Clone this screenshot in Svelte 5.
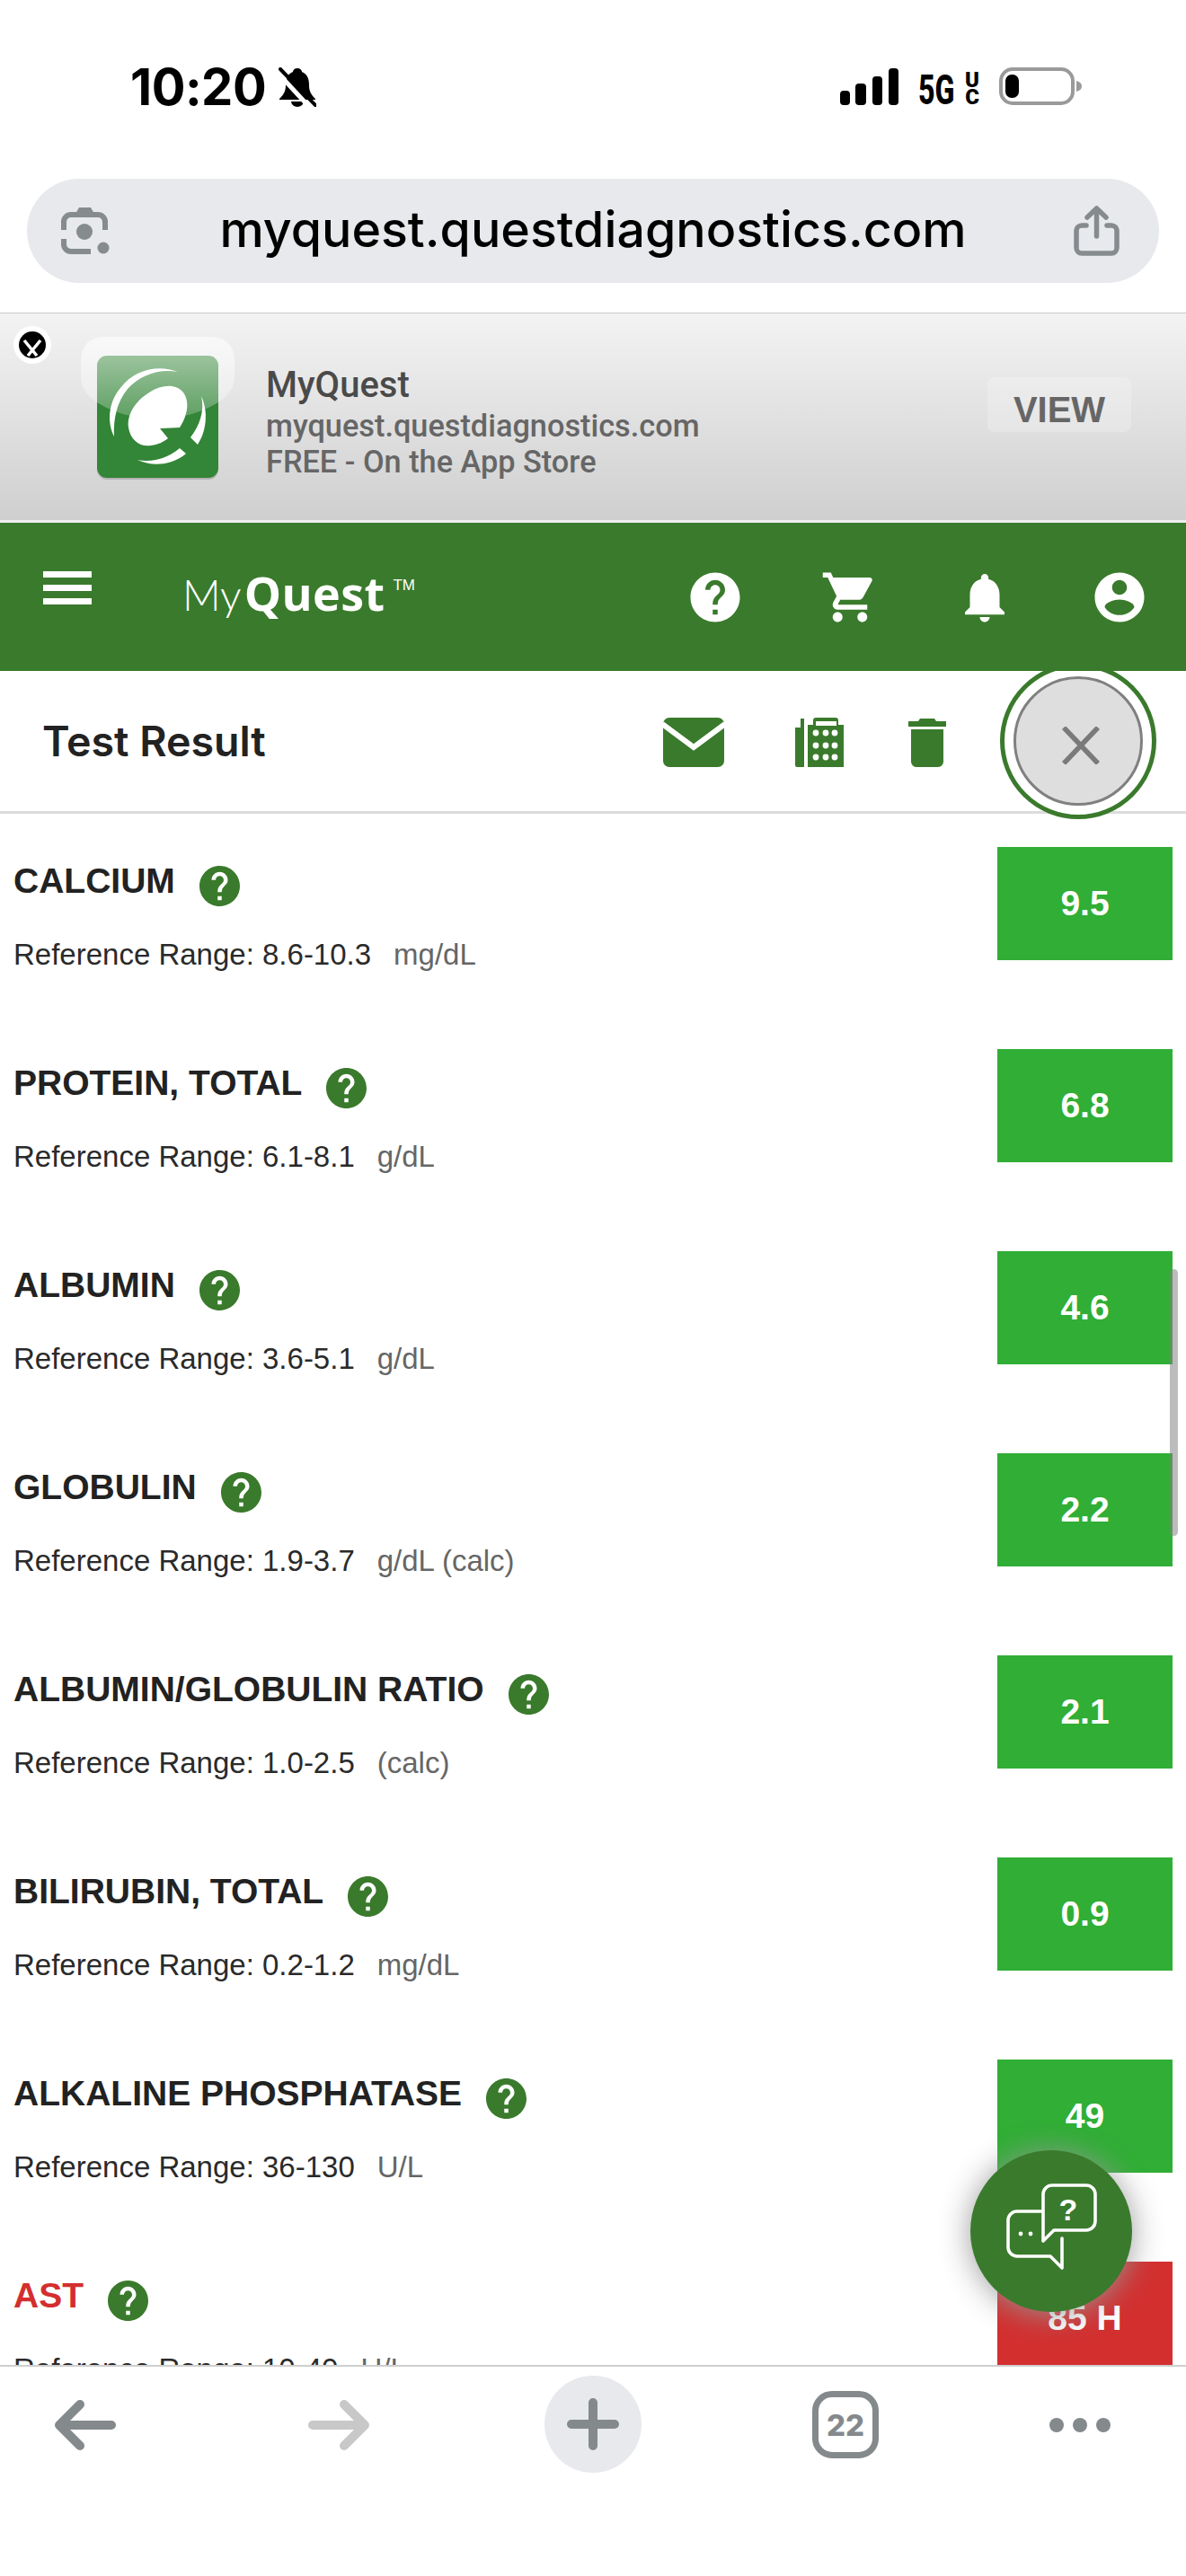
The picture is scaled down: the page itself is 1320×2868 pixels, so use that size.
<script lang="ts">
  interface Result {
    name: string;
    range: string;
    unit: string;
    value: string;
    high?: boolean;
  }

  const results: Result[] = [
    { name: 'CALCIUM', range: '8.6-10.3', unit: 'mg/dL', value: '9.5' },
    { name: 'PROTEIN, TOTAL', range: '6.1-8.1', unit: 'g/dL', value: '6.8' },
    { name: 'ALBUMIN', range: '3.6-5.1', unit: 'g/dL', value: '4.6' },
    { name: 'GLOBULIN', range: '1.9-3.7', unit: 'g/dL (calc)', value: '2.2' },
    { name: 'ALBUMIN/GLOBULIN RATIO', range: '1.0-2.5', unit: '(calc)', value: '2.1' },
    { name: 'BILIRUBIN, TOTAL', range: '0.2-1.2', unit: 'mg/dL', value: '0.9' },
    { name: 'ALKALINE PHOSPHATASE', range: '36-130', unit: 'U/L', value: '49' },
    { name: 'AST', range: '10-40', unit: 'U/L', value: '85 H', high: true },
  ];

  const helpPath =
    'M12 2C6.48 2 2 6.48 2 12s4.48 10 10 10 10-4.48 10-10S17.52 2 12 2zm1 17h-2v-2h2v2zm2.07-7.75l-.9.92C13.45 12.9 13 13.5 13 15h-2v-.5c0-1.1.45-2.1 1.17-2.83l1.24-1.26c.37-.36.59-.86.59-1.41 0-1.1-.9-2-2-2s-2 .9-2 2H8c0-2.21 1.79-4 4-4s4 1.79 4 4c0 .88-.36 1.68-.93 2.25z';
</script>

<div class="phone">
  <!-- iOS status bar -->
  <div class="status">
    <span class="time">10:20</span>
    <svg class="silent" width="42" height="45" viewBox="0 0 42 45">
      <path d="M21 1c-3 0-5 2-5 4C9 8 8 14 8 20c0 6-2 10-7 15v1h40v-1c-5-5-7-9-7-15 0-6-1-12-8-15 0-2-2-4-5-4zM14 38a7 6 0 0 0 14 0z" fill="#000" />
      <path d="M-1 6L36 46" stroke="#fff" stroke-width="5" />
      <path d="M2 2L41 42" stroke="#000" stroke-width="4" stroke-linecap="round" />
    </svg>
    <svg class="signal" width="65" height="41" viewBox="0 0 65 41">
      <rect x="0" y="25" width="11" height="16" rx="4" />
      <rect x="17" y="17" width="12" height="24" rx="4" />
      <rect x="36" y="9" width="11" height="32" rx="4" />
      <rect x="54" y="0" width="11" height="41" rx="4" />
    </svg>
    <span class="net">5G</span>
    <span class="net-uc"><span>U</span><span>C</span></span>
    <svg class="battery" width="92" height="42" viewBox="0 0 92 42">
      <rect x="2" y="2" width="80" height="38" rx="13" fill="none" stroke="#9a9a9a" stroke-width="4" />
      <rect x="7" y="8" width="15" height="26" rx="7" fill="#000" />
      <path d="M86 15c4 1 6 3 6 6s-2 5-6 6z" fill="#9a9a9a" />
    </svg>
  </div>

  <!-- address bar -->
  <div class="url-wrap">
    <div class="url-bar">
      <svg class="lens" width="55" height="54" viewBox="0 0 55 54" fill="none" stroke="#868b8e" stroke-width="6">
        <path d="M4 26V17a8 8 0 0 1 8-8h30a8 8 0 0 1 8 8v9" />
        <path d="M4 36v6a8 8 0 0 0 8 8h22" />
        <path d="M17 8l4-7h13l4 7z" fill="#868b8e" stroke="none" />
        <circle cx="27" cy="28" r="9" fill="#868b8e" stroke="none" />
        <circle cx="48" cy="46" r="6.5" fill="#868b8e" stroke="none" />
      </svg>
      <span class="url-text">myquest.questdiagnostics.com</span>
      <svg class="share" width="51" height="56" viewBox="0 0 51 56" fill="none" stroke="#868b8e" stroke-width="5.5" stroke-linecap="round" stroke-linejoin="round">
        <path d="M14 22H9a6 6 0 0 0-6 6v19a6 6 0 0 0 6 6h33a6 6 0 0 0 6-6V28a6 6 0 0 0-6-6h-5" />
        <path d="M25.5 34V4M15 13l10.5-10L36 13" />
      </svg>
    </div>
  </div>

  <!-- smart app banner -->
  <div class="banner">
    <div class="banner-close">
      <svg width="30" height="30" viewBox="0 0 30 30">
        <circle cx="15" cy="15" r="15" fill="#000" />
        <path d="M6 10L20 27M24 10L10 27" stroke="#fff" stroke-width="3.5" />
      </svg>
    </div>
    <svg class="app-icon" width="171" height="165" viewBox="0 0 171 165">
      <defs>
        <linearGradient id="gloss" x1="0" y1="0" x2="0" y2="1">
          <stop offset="0" stop-color="#fff" stop-opacity="0.6" />
          <stop offset="1" stop-color="#fff" stop-opacity="0.22" />
        </linearGradient>
      </defs>
      <rect x="18" y="23" width="135" height="136" rx="11" fill="#000" opacity="0.16" />
      <rect x="18" y="21" width="135" height="136" rx="11" fill="#338537" />
      <g fill="#fff" transform="translate(18 21)">
        <path d="M90 18C70 10 42 14 26 36 14 50 10 72 19 90 18 70 22 52 34 37 48 21 70 14 90 18Z" />
        <path d="M70 81L92 80C100 68 104 52 96 41 88 31 72 32 58 41 42 51 33 66 35 80 37 94 48 102 60 100 68 99 74 96 79 92Z" />
        <path d="M116 45C124 62 122 84 112 99L104 91C114 78 120 62 116 45Z" />
        <path d="M45 116C62 124 84 122 99 109L92 103C78 115 60 119 45 116Z" />
      </g>
      <path d="M28 0H143Q171 0 171 28V45Q171 72 120 87 85 93 50 87 0 72 0 45V28Q0 0 28 0Z" fill="url(#gloss)" />
    </svg>
    <div class="banner-text">
      <div class="banner-name">MyQuest</div>
      <div class="banner-line">myquest.questdiagnostics.com</div>
      <div class="banner-line">FREE - On the App Store</div>
    </div>
    <div class="view-btn">VIEW</div>
  </div>

  <!-- site header -->
  <header class="site-header">
    <div class="hamburger"><span></span><span></span><span></span></div>
    <div class="logo">
      <span class="logo-my">My</span><span class="logo-quest">Quest</span><span class="logo-tm">TM</span>
    </div>
    <div class="nav-icons">
      <svg width="66" height="66" viewBox="0 0 24 24" fill="#fff"><path d={helpPath} /></svg>
      <svg width="66" height="66" viewBox="0 0 24 24" fill="#fff"><path d="M7 18c-1.1 0-1.99.9-1.99 2S5.9 22 7 22s2-.9 2-2-.9-2-2-2zM1 2v2h2l3.6 7.59-1.35 2.45c-.16.28-.25.61-.25.96 0 1.1.9 2 2 2h12v-2H7.42c-.14 0-.25-.11-.25-.25l.03-.12.9-1.63h7.45c.75 0 1.41-.41 1.75-1.03l3.58-6.49c.08-.14.12-.31.12-.48 0-.55-.45-1-1-1H5.21l-.94-2H1zm16 16c-1.1 0-1.99.9-1.99 2s.89 2 1.99 2 2-.9 2-2-.9-2-2-2z" /></svg>
      <svg width="66" height="66" viewBox="0 0 24 24" fill="#fff"><path d="M12 22c1.1 0 2-.9 2-2h-4c0 1.1.89 2 2 2zm6-6v-5c0-3.07-1.64-5.64-4.5-6.32V4c0-.83-.67-1.5-1.5-1.5s-1.5.67-1.5 1.5v.68C7.63 5.36 6 7.92 6 11v5l-2 2v1h16v-1l-2-2z" /></svg>
      <svg width="66" height="66" viewBox="0 0 24 24" fill="#fff"><path d="M12 2C6.48 2 2 6.48 2 12s4.48 10 10 10 10-4.48 10-10S17.52 2 12 2zm0 3c1.66 0 3 1.34 3 3s-1.34 3-3 3-3-1.34-3-3 1.34-3 3-3zm0 14.2c-2.5 0-4.71-1.28-6-3.22.03-1.99 4-3.08 6-3.08 1.99 0 5.97 1.09 6 3.08-1.29 1.94-3.5 3.22-6 3.22z" /></svg>
    </div>
  </header>

  <!-- title row -->
  <div class="sub-header">
    <h1 class="page-title">Test Result</h1>
    <div class="actions">
      <svg width="68" height="55" viewBox="0 0 68 55">
        <rect width="68" height="55" rx="7" fill="#3a7a2c" />
        <path d="M-1 7L34 33 69 7" fill="none" stroke="#fff" stroke-width="6" />
      </svg>
      <svg class="fax" width="54" height="55" viewBox="0 0 54 55" fill="#3a7a2c">
        <path d="M0 11h6V1h4v54H2a2 2 0 0 1-2-2z" />
        <path fill-rule="evenodd" d="M20 3a3 3 0 0 1 3-3h22a3 3 0 0 1 3 3v5h6v47H14V8h6zm3 1v5h23V4z" />
        <g fill="#fff">
          {#each [17, 31, 44] as cy}
            {#each [23, 34, 44] as cx}
              <circle {cx} {cy} r="3.4" />
            {/each}
          {/each}
        </g>
      </svg>
      <svg width="42" height="54" viewBox="0 0 42 54" fill="#3a7a2c">
        <path d="M0 3h11l2-3h16l2 3h11v6H0z" />
        <path d="M3 12h36v36a6 6 0 0 1-6 6H9a6 6 0 0 1-6-6z" />
      </svg>
    </div>
    <div class="close-ring">
      <div class="close-btn">
        <svg width="42" height="42" viewBox="0 0 42 42">
          <path d="M2 1L40 41M40 1L2 41" stroke="#7a7a7a" stroke-width="5.5" />
        </svg>
      </div>
    </div>
  </div>

  <!-- results list -->
  <div class="list">
    {#each results as item (item.name)}
      <div class="row">
        <div class="row-info">
          <div class="row-head">
            <span class="row-name" class:high={item.high}>{item.name}</span>
            <svg class="help" width="45" height="45" viewBox="2 2 20 20" fill="#3a7a2c"><circle cx="12" cy="12" r="10" fill="#fff" /><path d={helpPath} /></svg>
          </div>
          <div class="row-range">
            Reference Range: {item.range}<span class="row-unit">{item.unit}</span>
          </div>
        </div>
        <div class="badge" class:high={item.high}>{item.value}</div>
      </div>
    {/each}

    <div class="scrollbar"></div>

    <div class="chat-fab">
      <svg width="180" height="180" viewBox="0 0 180 180" fill="none" stroke="#fff" stroke-width="3.6" stroke-linecap="round" stroke-linejoin="round">
        <path d="M81 101V49a10 10 0 0 1 10-10h38a10 10 0 0 1 10 10v30a10 10 0 0 1-10 10H93z" />
        <path d="M80 68H52a10 10 0 0 0-10 10v30a10 10 0 0 0 10 10h37l13 13V98" />
        <circle cx="56" cy="93" r="2.4" fill="#fff" stroke="none" />
        <circle cx="67" cy="93" r="2.4" fill="#fff" stroke="none" />
        <text x="109" y="78" text-anchor="middle" class="fab-q" fill="#fff" stroke="none">?</text>
      </svg>
    </div>
  </div>

  <!-- browser toolbar -->
  <div class="toolbar">
    <svg class="tb-back" width="68" height="56" viewBox="0 0 68 56" fill="none" stroke="#84898c" stroke-width="10" stroke-linecap="round" stroke-linejoin="round">
      <path d="M63 28H5M28 5L5 28l23 23" />
    </svg>
    <svg class="tb-forward" width="68" height="56" viewBox="0 0 68 56" fill="none" stroke="#c8c8c8" stroke-width="10" stroke-linecap="round" stroke-linejoin="round">
      <path d="M5 28h58M40 5l23 23-23 23" />
    </svg>
    <div class="tb-plus">
      <svg width="58" height="58" viewBox="0 0 58 58" fill="none" stroke="#84898c" stroke-width="10" stroke-linecap="round">
        <path d="M5 29h48M29 5v48" />
      </svg>
    </div>
    <div class="tb-tabs">22</div>
    <div class="tb-more"><span></span><span></span><span></span></div>
  </div>
</div>

<style>
  :global(body) {
    margin: 0;
    background: #fff;
    font-family: 'Liberation Sans', Arial, sans-serif;
  }

  .phone {
    width: 1320px;
    height: 2868px;
    display: flex;
    flex-direction: column;
    overflow: hidden;
    background: #fff;
  }

  .status {
    height: 45px;
    padding-top: 75px;
    display: flex;
    align-items: flex-start;
    color: #000;
    font-family: Inter, sans-serif;
  }

  .time {
    margin-left: 145px;
    font-size: 56px;
    font-weight: 700;
    line-height: 45px;
    letter-spacing: -0.5px;
  }

  .silent {
    margin-left: 14px;
  }

  .signal {
    margin-left: auto;
    margin-top: 1px;
  }

  .net {
    margin-left: 22px;
    font-size: 46px;
    font-weight: 800;
    line-height: 50px;
    width: 40px;
    transform: scaleX(0.7);
    transform-origin: left center;
    font-family: Roboto, sans-serif;
  }

  .net-uc {
    margin-left: 12px;
    display: flex;
    flex-direction: column;
    align-items: center;
    font-family: Roboto, sans-serif;
    font-size: 24px;
    font-weight: 900;
    line-height: 19px;
    margin-top: 5px;
  }

  .battery {
    margin-left: 22px;
    margin-right: 116px;
  }

  .url-wrap {
    padding: 79px 30px 0;
  }

  .url-bar {
    height: 116px;
    border-radius: 58px;
    background: #e7e9ec;
    display: flex;
    align-items: center;
    padding: 0 44px 0 37px;
  }

  .url-text {
    flex: 1;
    text-align: center;
    font-family: Inter, sans-serif;
    font-size: 55.5px;
    font-weight: 500;
    color: #000;
    margin: -6px 0 0 3px;
  }

  .banner {
    margin-top: 33px;
    height: 230px;
    display: flex;
    align-items: flex-start;
    border-top: 1px solid #c8c8c8;
    border-bottom: 3px solid #eee;
    background: linear-gradient(#f3f3f3, #cfcfcf);
    font-family: Roboto, sans-serif;
  }

  .banner-close {
    margin: 14px 0 0 15px;
    width: 42px;
    height: 42px;
    border-radius: 50%;
    background: #fff;
    display: flex;
    align-items: center;
    justify-content: center;
  }

  .app-icon {
    margin: 26px 0 0 33px;
  }

  .banner-text {
    margin: 57px 0 0 35px;
  }

  .banner-name {
    font-size: 40px;
    font-weight: 500;
    line-height: 46px;
    color: #4a4a4a;
    margin-bottom: 2px;
  }

  .banner-line {
    font-size: 34.3px;
    font-weight: 500;
    line-height: 40px;
    color: #666;
  }

  .view-btn {
    margin: 71px 61px 0 auto;
    width: 160px;
    height: 61px;
    border-radius: 8px;
    background: rgba(255, 255, 255, 0.22);
    text-align: center;
    font-family: 'Liberation Sans', sans-serif;
    font-size: 40px;
    font-weight: 700;
    line-height: 60px;
    color: #666;
    box-sizing: border-box;
    padding-top: 6px;
  }

  .site-header {
    position: relative;
    z-index: 2;
    height: 165px;
    display: flex;
    align-items: center;
    padding-left: 48px;
    background: #3a7a2c;
    color: #fff;
  }

  .hamburger {
    width: 54px;
    display: flex;
    flex-direction: column;
    gap: 8px;
    margin-top: -21px;
  }

  .hamburger span {
    height: 7px;
    background: #fff;
  }

  .logo {
    margin-left: 101px;
    display: flex;
    align-items: baseline;
    font-family: Lato, sans-serif;
    font-size: 47px;
    margin-top: -10px;
  }

  .logo-my {
    font-weight: 300;
    margin-right: 3px;
  }

  .logo-quest {
    font-family: 'Open Sans', sans-serif;
    font-size: 52px;
    font-weight: 700;
    letter-spacing: 0.4px;
  }

  .logo-tm {
    font-family: 'Liberation Sans', sans-serif;
    font-size: 17px;
    margin-left: 9px;
    transform: translateY(-23px);
  }

  .nav-icons {
    margin-left: auto;
    padding-right: 41px;
    display: flex;
    gap: 84px;
  }

  .sub-header {
    position: relative;
    z-index: 1;
    height: 156px;
    border-bottom: 3px solid #dcdcdc;
    display: flex;
    align-items: center;
    padding-left: 47px;
  }

  .page-title {
    margin: 0;
    font-family: Inter, sans-serif;
    font-size: 46.5px;
    font-weight: 600;
    color: #222;
  }

  .actions {
    margin-left: auto;
    margin-right: 267px;
    display: flex;
    align-items: center;
    padding-top: 3px;
  }

  .fax {
    margin: 0 72px 0 79px;
  }

  .close-ring {
    position: absolute;
    top: -9px;
    right: 33px;
    width: 174px;
    height: 174px;
    box-sizing: border-box;
    border: 5px solid #3a7a2c;
    border-radius: 50%;
    background: #fff;
    display: flex;
    align-items: center;
    justify-content: center;
  }

  .close-btn {
    width: 144px;
    height: 144px;
    box-sizing: border-box;
    border: 3px solid #808080;
    border-radius: 50%;
    background: #dedede;
    display: flex;
    align-items: center;
    justify-content: center;
    padding: 9px 0 0 6px;
  }

  .list {
    position: relative;
    flex: 1;
    min-height: 0;
    overflow: hidden;
    padding-top: 37px;
  }

  .row {
    height: 225px;
    display: flex;
    justify-content: space-between;
    padding: 0 15px;
  }

  .row-head {
    display: flex;
    align-items: flex-start;
    gap: 27px;
    height: 66px;
  }

  .row-name {
    margin-top: 16px;
    font-size: 39px;
    font-weight: 700;
    line-height: 44px;
    color: #222;
  }

  .row-name.high {
    color: #d32f2f;
  }

  .help {
    margin-top: 21px;
  }

  .row-range {
    margin-top: 36px;
    font-size: 33px;
    line-height: 36px;
    color: #2a2a2a;
  }

  .row-unit {
    margin-left: 25px;
    color: #666;
  }

  .badge {
    width: 195px;
    height: 126px;
    background: #30ae35;
    color: #fff;
    font-size: 39px;
    font-weight: 700;
    display: flex;
    align-items: center;
    justify-content: center;
  }

  .badge.high {
    background: #d32f2f;
  }

  .scrollbar {
    position: absolute;
    top: 507px;
    right: 9px;
    width: 9px;
    height: 297px;
    border-radius: 5px;
    background: rgba(128, 128, 128, 0.53);
  }

  .chat-fab {
    position: absolute;
    top: 1488px;
    left: 1080px;
    width: 180px;
    height: 180px;
    border-radius: 50%;
    background: #3a7a2c;
    box-shadow: 0 2px 34px rgba(150, 150, 150, 0.95);
  }

  .fab-q {
    font-family: 'Liberation Sans', sans-serif;
    font-size: 34px;
    font-weight: 700;
  }

  .toolbar {
    border-top: 2px solid #cfcfcf;
    box-sizing: border-box;
    flex: none;
    height: 235px;
    display: flex;
    align-items: flex-start;
    padding: 10px 0 0 61px;
    background: #fff;
  }

  .tb-back {
    margin-top: 27px;
  }

  .tb-forward {
    margin: 27px 0 0 214px;
  }

  .tb-plus {
    margin-left: 195px;
    width: 108px;
    height: 108px;
    border-radius: 50%;
    background: #e7e9ec;
    display: flex;
    align-items: center;
    justify-content: center;
  }

  .tb-tabs {
    margin: 17px 0 0 190px;
    width: 74px;
    height: 75px;
    box-sizing: border-box;
    border: 7px solid #84898c;
    border-radius: 22px;
    display: flex;
    align-items: center;
    justify-content: center;
    font-family: Inter, sans-serif;
    font-size: 33px;
    font-weight: 800;
    color: #84898c;
  }

  .tb-more {
    margin: 47px 0 0 190px;
    display: flex;
    gap: 10px;
  }

  .tb-more span {
    width: 16px;
    height: 16px;
    border-radius: 50%;
    background: #84898c;
  }
</style>
